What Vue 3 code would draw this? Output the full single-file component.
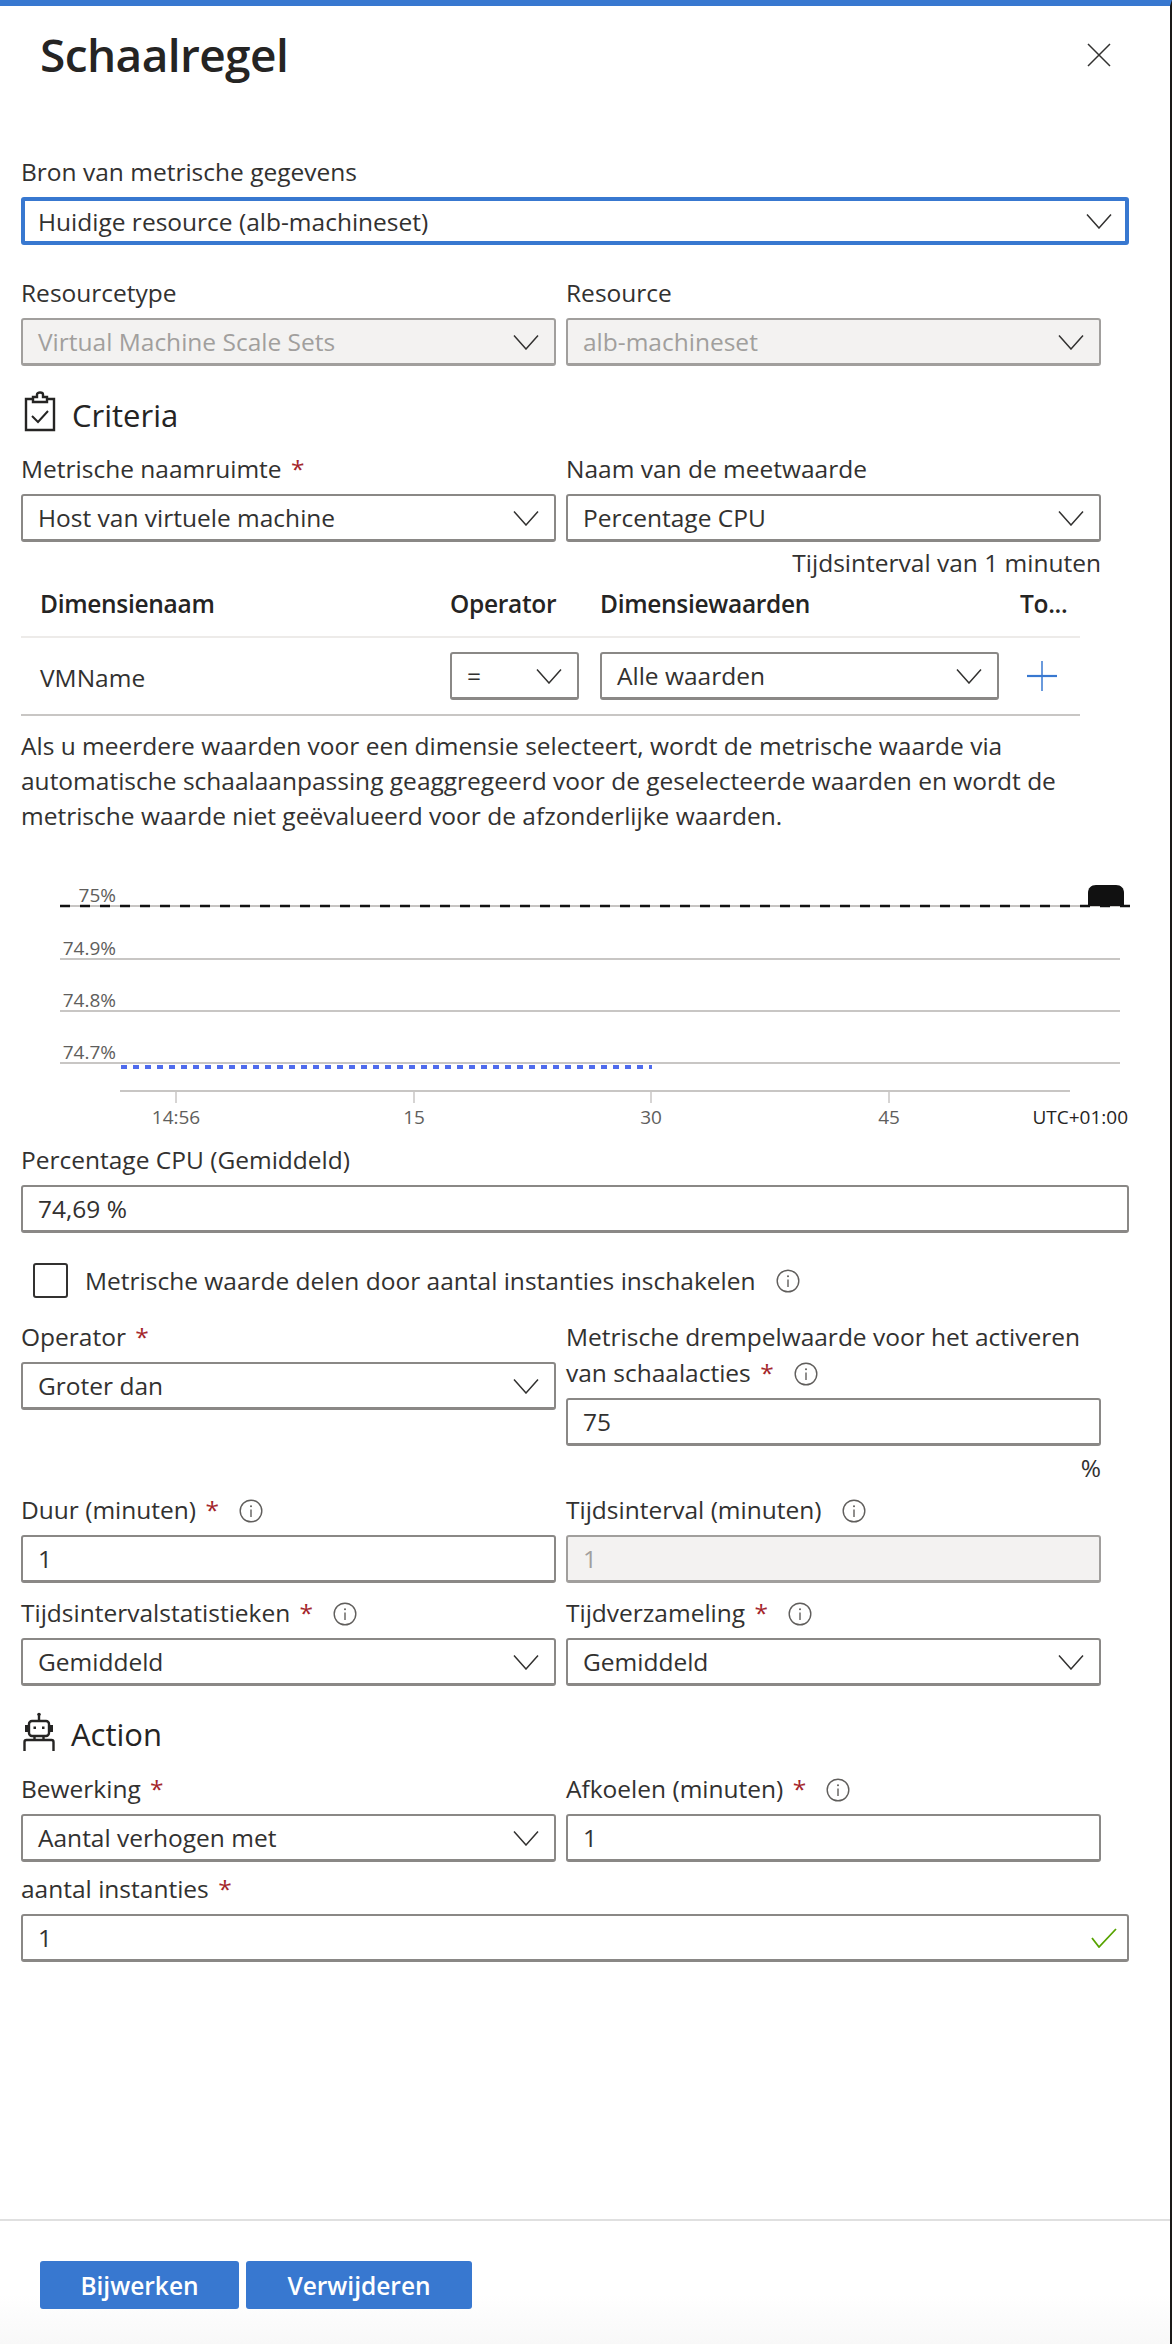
<script setup>
const columns = ['Dimensienaam', 'Operator', 'Dimensiewaarden', 'To...'];
const gridLines = [
  { y: 90, label: '74.9%' },
  { y: 142, label: '74.8%' },
  { y: 194, label: '74.7%' },
];
const ticks = [
  { x: 176, label: '14:56' },
  { x: 414, label: '15' },
  { x: 651, label: '30' },
  { x: 889, label: '45' },
];
</script>

<template>
  <div class="panel">
    <svg class="sprite" width="0" height="0">
      <symbol id="chevron" viewBox="0 0 26 16">
        <path d="M1 1.5 13 15 25 1.5" fill="none" stroke="#323130" stroke-width="1.5" />
      </symbol>
      <symbol id="info" viewBox="0 0 24 24">
        <circle cx="12" cy="12" r="10.8" fill="none" stroke="#605e5c" stroke-width="1.4" />
        <path d="M12 10.5V18" stroke="#605e5c" stroke-width="1.4" />
        <circle cx="12" cy="7.2" r="1" fill="#605e5c" />
      </symbol>
    </svg>

    <header class="head">
      <h1>Schaalregel</h1>
      <svg class="close" width="24" height="24" viewBox="0 0 24 24">
        <path d="M1 1 23 23M23 1 1 23" stroke="#323130" stroke-width="1.5" />
      </svg>
    </header>

    <main class="body">
      <div class="field source">
        <label>Bron van metrische gegevens</label>
        <div class="box focus">Huidige resource (alb-machineset)<svg class="chev"><use href="#chevron" /></svg></div>
      </div>

      <div class="row resource-row">
        <div class="field">
          <label>Resourcetype</label>
          <div class="box disabled">Virtual Machine Scale Sets<svg class="chev"><use href="#chevron" /></svg></div>
        </div>
        <div class="field">
          <label>Resource</label>
          <div class="box disabled">alb-machineset<svg class="chev"><use href="#chevron" /></svg></div>
        </div>
      </div>

      <h2 class="section criteria">
        <svg width="32" height="42" viewBox="0 0 32 42" fill="none" stroke="#252423" stroke-width="2.4">
          <path d="M9 8H2V39H30V8H23" />
          <path d="M9 11V6H13V3.5C13 0.8 19 0.8 19 3.5V6H23V11Z" />
          <path d="M8 25 14 31 24 20" stroke-width="2" />
        </svg>
        Criteria
      </h2>

      <div class="row">
        <div class="field">
          <label>Metrische naamruimte <i>*</i></label>
          <div class="box">Host van virtuele machine<svg class="chev"><use href="#chevron" /></svg></div>
        </div>
        <div class="field">
          <label>Naam van de meetwaarde</label>
          <div class="box">Percentage CPU<svg class="chev"><use href="#chevron" /></svg></div>
        </div>
      </div>

      <div class="interval">Tijdsinterval van 1 minuten</div>

      <div class="dim-table">
        <div class="dim-row dim-head">
          <span v-for="c in columns" :key="c">{{ c }}</span>
        </div>
        <div class="dim-row dim-body">
          <span>VMName</span>
          <div class="box">=<svg class="chev"><use href="#chevron" /></svg></div>
          <div class="box">Alle waarden<svg class="chev"><use href="#chevron" /></svg></div>
          <svg class="plus" width="30" height="30" viewBox="0 0 30 30">
            <path d="M15 0V30" stroke="#3878d0" stroke-width="1.5" />
            <path d="M0 15H30" stroke="#3878d0" stroke-width="2.2" />
          </svg>
        </div>
      </div>

      <p class="note">
        Als u meerdere waarden voor een dimensie selecteert, wordt de metrische waarde via
        automatische schaalaanpassing geaggregeerd voor de geselecteerde waarden en wordt de
        metrische waarde niet geëvalueerd voor de afzonderlijke waarden.
      </p>
    </main>

    <svg class="chart" width="1170" height="265" viewBox="0 0 1170 265">
      <path d="M60 37H1130" stroke="#c8c6c4" stroke-width="2" />
      <path d="M60 37H1130" stroke="#111" stroke-width="2.4" stroke-dasharray="10 10" />
      <path d="M1088 37V24C1088 19 1091 16 1096 16H1116C1121 16 1124 19 1124 24V37Z" fill="#111" />
      <text class="tick" x="116" y="33" text-anchor="end">75%</text>
      <g v-for="g in gridLines" :key="g.y">
        <path :d="`M60 ${g.y}H1120`" stroke="#c8c6c4" stroke-width="2" />
        <text class="tick" x="116" :y="g.y - 4" text-anchor="end">{{ g.label }}</text>
      </g>
      <path d="M121 198H652" stroke="#4f6bed" stroke-width="4" stroke-dasharray="6 6" />
      <path d="M120 222H1070" stroke="#c8c6c4" stroke-width="2" />
      <g v-for="t in ticks" :key="t.x">
        <path :d="`M${t.x} 223V234`" stroke="#c8c6c4" stroke-width="1.5" />
        <text class="tick" :x="t.x" y="255" text-anchor="middle">{{ t.label }}</text>
      </g>
      <text class="tick utc" x="1128" y="255" text-anchor="end">UTC+01:00</text>
    </svg>

    <section class="body lower">
      <div class="field source">
        <label>Percentage CPU (Gemiddeld)</label>
        <div class="box">74,69 %</div>
      </div>

      <div class="check-row">
        <span class="checkbox"></span>
        <span>Metrische waarde delen door aantal instanties inschakelen</span>
        <svg class="info"><use href="#info" /></svg>
      </div>

      <div class="row threshold-row">
        <div class="field">
          <label>Operator <i>*</i></label>
          <div class="box">Groter dan<svg class="chev"><use href="#chevron" /></svg></div>
        </div>
        <div class="field">
          <label>Metrische drempelwaarde voor het activeren van schaalacties <i>*</i><svg class="info"><use href="#info" /></svg></label>
          <div class="box">75</div>
          <div class="unit">%</div>
        </div>
      </div>

      <div class="row duration-row">
        <div class="field">
          <label>Duur (minuten) <i>*</i><svg class="info"><use href="#info" /></svg></label>
          <div class="box">1</div>
        </div>
        <div class="field">
          <label>Tijdsinterval (minuten)<svg class="info"><use href="#info" /></svg></label>
          <div class="box disabled">1</div>
        </div>
      </div>

      <div class="row stat-row">
        <div class="field">
          <label>Tijdsintervalstatistieken <i>*</i><svg class="info"><use href="#info" /></svg></label>
          <div class="box">Gemiddeld<svg class="chev"><use href="#chevron" /></svg></div>
        </div>
        <div class="field">
          <label>Tijdverzameling <i>*</i><svg class="info"><use href="#info" /></svg></label>
          <div class="box">Gemiddeld<svg class="chev"><use href="#chevron" /></svg></div>
        </div>
      </div>

      <h2 class="section action">
        <svg width="32" height="40" viewBox="0 0 32 40" fill="none" stroke="#252423" stroke-width="2.4">
          <circle cx="16" cy="2.5" r="1.8" fill="#252423" stroke="none" />
          <path d="M16 4V9" />
          <rect x="6" y="9" width="20" height="15" rx="3" />
          <rect x="2" y="13" width="3" height="7" fill="#252423" stroke="none" />
          <rect x="27" y="13" width="3" height="7" fill="#252423" stroke="none" />
          <path d="M11.5 24V28M20.5 24V28M1.5 39V30C1.5 28.8 2.3 28 3.5 28H28.5C29.7 28 30.5 28.8 30.5 30V39" />
          <rect x="10.5" y="14.5" width="2.5" height="2.5" fill="#252423" stroke="none" />
          <rect x="19" y="14.5" width="2.5" height="2.5" fill="#252423" stroke="none" />
        </svg>
        Action
      </h2>

      <div class="row">
        <div class="field">
          <label>Bewerking <i>*</i></label>
          <div class="box">Aantal verhogen met<svg class="chev"><use href="#chevron" /></svg></div>
        </div>
        <div class="field">
          <label>Afkoelen (minuten) <i>*</i><svg class="info"><use href="#info" /></svg></label>
          <div class="box">1</div>
        </div>
      </div>

      <div class="field source count">
        <label>aantal instanties <i>*</i></label>
        <div class="box">
          1
          <svg class="valid" width="26" height="20" viewBox="0 0 26 20">
            <path d="M1 10 8 19 25 1" fill="none" stroke="#57a300" stroke-width="1.8" />
          </svg>
        </div>
      </div>
    </section>

    <footer class="foot">
      <button class="bijwerken">Bijwerken</button>
      <button class="verwijderen">Verwijderen</button>
    </footer>
  </div>
</template>

<style scoped>
.panel {
  width: 1172px;
  height: 2344px;
  box-sizing: border-box;
  display: flex;
  flex-direction: column;
  border-top: 6px solid #3878d0;
  border-right: 2px solid #1b1a19;
  background: #fff;
  color: #323130;
  font-family: "Open Sans", "Noto Sans", sans-serif;
  font-size: 24.5px;
}

.sprite {
  position: absolute;
}

.head {
  height: 94px;
  padding: 0 59px 0 40px;
  display: flex;
  align-items: center;
  justify-content: space-between;
  flex-shrink: 0;
}

.head h1 {
  margin: 2px 0 0;
  font-size: 46px;
  font-weight: 600;
  color: #252423;
  letter-spacing: -0.6px;
}

.close {
  margin-top: 3px;
}

.body {
  padding-left: 21px;
  flex-shrink: 0;
}

.source {
  width: 1108px;
  margin-top: 56px;
}

.row {
  display: grid;
  grid-template-columns: 535px 535px;
  column-gap: 10px;
}

.resource-row {
  margin-top: 32px;
}

.field label {
  display: block;
  line-height: 36px;
  margin: -2px 0 7px;
}

.field label i {
  font-style: normal;
  color: #a4262c;
  margin-left: 3px;
}

.box {
  height: 48px;
  box-sizing: border-box;
  border: 2px solid #8a8886;
  border-bottom-width: 3px;
  border-radius: 3px;
  padding: 0 15px;
  display: flex;
  align-items: center;
  justify-content: space-between;
  white-space: nowrap;
}

.box.focus {
  border: 4px solid #3878d0;
  padding: 0 13px;
}

.box.disabled {
  background: #f3f2f1;
  border-color: #a19f9d;
  color: #a19f9d;
}

.chev {
  width: 26px;
  height: 16px;
  flex-shrink: 0;
}

.info {
  width: 24px;
  height: 24px;
  margin-left: 20px;
  vertical-align: -4px;
}

.section {
  margin: 0;
  display: flex;
  align-items: flex-end;
  gap: 16px;
  font-size: 31px;
  font-weight: 400;
  color: #252423;
  line-height: 36px;
}

.criteria {
  margin: 25px 0 20px 3px;
}

.action {
  margin: 26px 0 21px 2px;
}

.interval {
  width: 1080px;
  text-align: right;
  line-height: 36px;
  margin-top: 3px;
}

.dim-table {
  width: 1059px;
}

.dim-row {
  display: grid;
  grid-template-columns: 410px 150px 420px 1fr;
  padding-left: 19px;
  box-sizing: border-box;
}

.dim-head {
  height: 57px;
  align-items: center;
  padding-bottom: 10px;
  border-bottom: 2px solid #edebe9;
  font-weight: 600;
  color: #252423;
  letter-spacing: -0.3px;
}

.dim-body {
  grid-template-columns: 410px 129px 420px 1fr;
  height: 78px;
  padding-top: 14px;
  border-bottom: 2px solid #c8c6c4;
}

.dim-body .box:nth-child(3) {
  margin-left: 21px;
}

.dim-body > span {
  line-height: 52px;
}

.plus {
  margin: 9px 0 0 28px;
}

.note {
  width: 1120px;
  margin: 12px 0 0;
  line-height: 35px;
}

.chart {
  display: block;
  margin-top: 36px;
  flex-shrink: 0;
}

.tick {
  font-size: 19px;
  fill: #605e5c;
}

.utc {
  fill: #252423;
}

.lower .source {
  margin-top: 10px;
}

.check-row {
  display: flex;
  align-items: center;
  margin: 30px 0 0 12px;
  height: 35px;
}

.checkbox {
  width: 35px;
  height: 35px;
  box-sizing: border-box;
  border: 2px solid #323130;
  border-radius: 3px;
  margin-right: 17px;
}

.threshold-row {
  margin-top: 23px;
}

.unit {
  text-align: right;
  line-height: 36px;
  margin-top: 4px;
}

.duration-row {
  margin-top: 8px;
}

.stat-row {
  margin-top: 14px;
}

.lower .count {
  margin-top: 11px;
}

.valid {
  margin-right: -5px;
}

.foot {
  margin-top: auto;
  height: 125px;
  box-sizing: border-box;
  padding: 40px 0 0 40px;
  display: flex;
  gap: 7px;
  border-top: 2px solid #e0e0e0;
  background: linear-gradient(to bottom, #fff 60%, #f8f8f8 100%);
}

.foot button {
  height: 48px;
  border: none;
  border-radius: 3px;
  background: #3878d0;
  color: #fff;
  font-family: inherit;
  font-size: 24.5px;
  font-weight: 600;
}

.bijwerken {
  width: 199px;
}

.verwijderen {
  width: 226px;
}
</style>
